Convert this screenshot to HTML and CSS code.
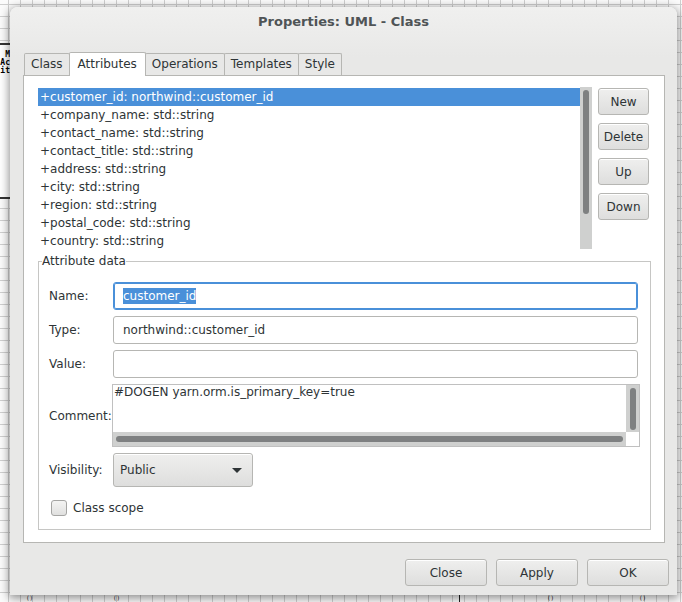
FILE: index.html
```html
<!DOCTYPE html>
<html>
<head>
<meta charset="utf-8">
<link rel="stylesheet" href="styles.css">
</head>
<body>
<div class="canvas">
  <div class="umlbox"><span>M</span><span>Ac</span><span>it</span></div>
  <div class="canvas-marks">
    <span class="mark m1">()</span><span class="mark m2">()</span><span class="mark m3">()</span><span class="mark m4">()</span><span class="vline"></span>
  </div>
  <div class="dialog">
    <div class="titlebar">Properties: UML - Class</div>
    <div class="content">
      <div class="tabs">
        <div class="tab">Class</div>
        <div class="tab active">Attributes</div>
        <div class="tab">Operations</div>
        <div class="tab">Templates</div>
        <div class="tab">Style</div>
      </div>
      <div class="panel">
        <div class="top-row">
          <div class="list-wrap">
            <ul class="list">
              <li class="selected">+customer_id: northwind::customer_id</li>
              <li>+company_name: std::string</li>
              <li>+contact_name: std::string</li>
              <li>+contact_title: std::string</li>
              <li>+address: std::string</li>
              <li>+city: std::string</li>
              <li>+region: std::string</li>
              <li>+postal_code: std::string</li>
              <li>+country: std::string</li>
            </ul>
            <div class="vscroll"><div class="vthumb"></div></div>
          </div>
          <div class="side-buttons">
            <button class="btn">New</button>
            <button class="btn">Delete</button>
            <button class="btn">Up</button>
            <button class="btn">Down</button>
          </div>
        </div>
        <fieldset class="frame">
          <legend>Attribute data</legend>
          <div class="form">
            <label class="lbl">Name:</label>
            <div class="entry focused"><span class="sel">customer_id</span></div>
            <label class="lbl">Type:</label>
            <div class="entry">northwind::customer_id</div>
            <label class="lbl">Value:</label>
            <div class="entry"></div>
            <label class="lbl">Comment:</label>
            <div class="textview">
              <div class="tv-main">
                <div class="tv-text">#DOGEN yarn.orm.is_primary_key=true</div>
                <div class="tv-vscroll"><div class="tv-vthumb"></div></div>
              </div>
              <div class="tv-bottom">
                <div class="tv-hscroll"><div class="tv-hthumb"></div></div>
                <div class="tv-corner"></div>
              </div>
            </div>
            <label class="lbl">Visibility:</label>
            <div class="combo-cell">
              <div class="combo"><span>Public</span><span class="arrow"></span></div>
            </div>
          </div>
          <div class="check-row">
            <span class="checkbox"></span><span>Class scope</span>
          </div>
        </fieldset>
      </div>
    </div>
    <div class="actions">
      <button class="btn action">Close</button>
      <button class="btn action">Apply</button>
      <button class="btn action">OK</button>
    </div>
  </div>
</div>
</body>
</html>
```
FILE: styles.css
```css
* { box-sizing: border-box; }
html, body { margin: 0; padding: 0; }
body {
  width: 682px;
  height: 602px;
  overflow: hidden;
  font-family: "DejaVu Sans", sans-serif;
  font-size: 12px;
  color: #2e3436;
}
.canvas {
  position: relative;
  width: 682px;
  height: 602px;
  background-color: #fbfbfb;
  background-image:
    linear-gradient(#cfcfcf 1px, transparent 1px),
    linear-gradient(90deg, #cfcfcf 1px, transparent 1px);
  background-size: 12px 12px;
  background-position: -4px 4px;
  padding: 7px 0 0 10px;
}
.umlbox {
  position: absolute;
  left: -20px;
  top: 43px;
  width: 32px;
  height: 156px;
  background: #fff;
  border-top: 2px solid #333;
  border-bottom: 2px solid #333;
  font-family: "DejaVu Sans Mono", monospace;
  font-size: 8px;
  font-weight: bold;
  color: #000;
  display: flex;
  flex-direction: column;
  align-items: flex-end;
  padding: 6px 2px 0 0;
  line-height: 8px;
}
.mark {
  position: absolute;
  top: 595px;
  font-family: "DejaVu Sans Mono", monospace;
  font-size: 6px;
  line-height: 6px;
  color: #222;
}
.m1 { left: 26px; }
.m2 { left: 113px; }
.m3 { left: 547px; }
.m4 { left: 639px; }
.vline { position: absolute; left: 459px; top: 595px; width: 1px; height: 7px; background: #222; }
.dialog {
  position: relative;
  width: 667px;
  height: 588px;
  background: linear-gradient(#f0f0ef, #e8e8e7 50px);
  border-radius: 8px 8px 0 0;
  box-shadow: 0 2px 10px 1px rgba(0,0,0,0.45);
  display: flex;
  flex-direction: column;
}
.titlebar {
  height: 30px;
  line-height: 30px;
  text-align: center;
  font-weight: bold;
  font-size: 13px;
  color: #4f5456;
}
.content {
  padding: 15px 12px 0 13px;
}
.tabs {
  display: flex;
  align-items: flex-end;
  height: 23px;
  padding-left: 1px;
  position: relative;
  z-index: 1;
}
.tab {
  height: 22px;
  line-height: 21px;
  padding: 0 6px;
  border: 1px solid #b6b6b3;
  border-bottom: none;
  margin-right: -1px;
  background: #e8e8e7;
  border-radius: 2px 2px 0 0;
  color: #2e3436;
}
.tab.active {
  height: 24px;
  margin-bottom: -1px;
  line-height: 22px;
  padding: 0 8px;
  background: #fff;
}
.panel {
  height: 468px;
  background: #fff;
  border: 1px solid #b6b6b3;
  padding: 11px 13px 11px 14px;
}
.top-row {
  display: flex;
  gap: 6px;
}
.list-wrap {
  display: flex;
  width: 554px;
  height: 162px;
}
.list {
  list-style: none;
  margin: 0;
  padding: 1px 0 0 0;
  flex: 1;
}
.list li {
  height: 18px;
  line-height: 18px;
  padding-left: 2px;
  white-space: nowrap;
}
.list li.selected {
  background: #4a90d9;
  color: #fff;
}
.vscroll {
  width: 12px;
  background: #cfd0cf;
  padding: 3px 2px 0 3px;
}
.vthumb {
  width: 6px;
  height: 124px;
  background: #7e8081;
  border-radius: 3px;
}
.side-buttons {
  display: flex;
  flex-direction: column;
  gap: 8px;
  padding-top: 1px;
}
.btn {
  font-family: "DejaVu Sans", sans-serif;
  font-size: 12px;
  color: #2e3436;
  border: 1px solid #b6b6b3;
  border-radius: 3px;
  background: linear-gradient(#efefee, #dededd);
  height: 27px;
  padding: 0;
  margin: 0;
  box-shadow: inset 0 1px #fff;
}
.side-buttons .btn { width: 51px; }
.frame {
  margin: 5px 0 0 0;
  padding: 14px 12px 0 10px;
  border: 1px solid #c6c6c4;
  height: 276px;
  min-width: 0;
}
.frame legend {
  padding: 0;
  margin-left: -7px;
  line-height: 14px;
}
.form {
  display: grid;
  grid-template-columns: 64px 1fr;
  grid-auto-rows: auto;
  row-gap: 6px;
  align-items: center;
}
.lbl { color: #2e3436; }
.entry {
  height: 28px;
  border: 1px solid #b6b6b3;
  border-radius: 3px;
  padding-left: 9px;
  line-height: 26px;
  background: #fff;
}
.entry.focused {
  border-color: #4a90d9;
  box-shadow: inset 0 0 0 1px #4a90d9;
}
.sel {
  background: #4a90d9;
  color: #fff;
  padding: 1px 0;
}
.textview {
  height: 63px;
  margin-left: -1px;
  margin-right: -2px;
  border: 1px solid #c0c0c0;
  display: flex;
  flex-direction: column;
}
.tv-main { flex: 1; display: flex; }
.tv-text { flex: 1; padding: 0 0 0 1px; line-height: 14px; }
.tv-vscroll {
  width: 13px;
  background: #cfd0cf;
  padding: 3px 3px 0 4px;
}
.tv-vthumb {
  width: 6px;
  height: 42px;
  background: #7e8081;
  border-radius: 3px;
}
.tv-bottom { height: 14px; display: flex; }
.tv-hscroll {
  flex: 1;
  background: #cfd0cf;
  padding: 4px 3px 0 3px;
}
.tv-hthumb {
  height: 6px;
  background: #7e8081;
  border-radius: 3px;
}
.tv-corner { width: 13px; background: #fff; }
.combo-cell { display: flex; }
.combo {
  width: 140px;
  height: 34px;
  border: 1px solid #b6b6b3;
  border-radius: 3px;
  background: linear-gradient(#efefee, #dededd);
  box-shadow: inset 0 1px #fff;
  display: flex;
  align-items: center;
  justify-content: space-between;
  padding: 0 10px 0 6px;
}
.arrow {
  width: 0;
  height: 0;
  border-left: 5px solid transparent;
  border-right: 5px solid transparent;
  border-top: 5px solid #2e3436;
}
.check-row {
  display: flex;
  align-items: center;
  gap: 6px;
  margin-top: 13px;
  padding-left: 2px;
}
.checkbox {
  width: 16px;
  height: 16px;
  border: 1px solid #a5a5a3;
  border-radius: 3px;
  background: linear-gradient(#f4f4f3, #e0e0df);
}
.actions {
  margin-top: auto;
  display: flex;
  justify-content: flex-end;
  gap: 9px;
  padding: 0 8px 9px 0;
}
.action { width: 82px; }
```
